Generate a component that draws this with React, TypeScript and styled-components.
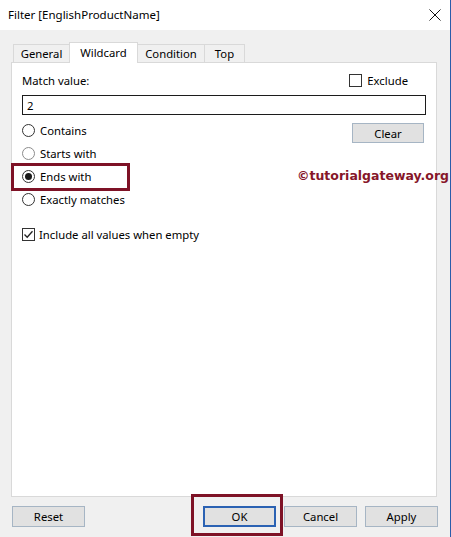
import React from "react";
import styled, { createGlobalStyle } from "styled-components";

const Global = createGlobalStyle`
  html, body { margin: 0; padding: 0; background: #f0f0f0; }
  body {
    font-family: "Noto Sans", "Segoe UI", sans-serif;
    font-size: 11.3px;
    color: #000;
  }
  *, *::before, *::after { box-sizing: border-box; }
`;

const MAROON = "#7e1226";

const Window = styled.div`
  position: relative;
  width: 451px;
  height: 537px;
  display: flex;
  flex-direction: column;
  border-right: 1px solid #2a5caa;
  background: #f0f0f0;
  overflow: hidden;
`;

const TitleBar = styled.div`
  flex: none;
  height: 30px;
  background: #fff;
  display: flex;
  align-items: center;
  justify-content: space-between;
  padding: 0 9px 0 8px;
`;

const Title = styled.span`
  font-size: 11.5px;
  line-height: 14px;
  color: #000;
`;

const Body = styled.div`
  flex: 1;
  display: flex;
  flex-direction: column;
  padding: 12px 13px 0 11px;
`;

const TabRow = styled.div`
  display: flex;
  align-items: flex-end;
  height: 21px;
  margin-bottom: -1px;
  padding-left: 2px;
  position: relative;
  z-index: 1;
`;

const Tab = styled.div<{ $active?: boolean; $w: number }>`
  width: ${(p) => p.$w}px;
  height: ${(p) => (p.$active ? 21 : 19)}px;
  margin-left: -1px;
  display: flex;
  align-items: center;
  justify-content: center;
  background: ${(p) => (p.$active ? "#fff" : "#f0f0f0")};
  border: 1px solid #d9d9d9;
  border-bottom: ${(p) => (p.$active ? "none" : "1px solid #d9d9d9")};
  padding-bottom: ${(p) => (p.$active ? 1 : 0)}px;
  &:first-child { margin-left: 0; }
`;

const Panel = styled.div`
  flex: 1;
  background: #fff;
  border: 1px solid #d9d9d9;
  padding: 11px 10px 0 10px;
  display: flex;
  flex-direction: column;
`;

const HeaderRow = styled.div`
  display: flex;
  align-items: center;
  justify-content: space-between;
  height: 13px;
`;

const Label = styled.span`
  line-height: 14px;
`;

const CheckGroup = styled.label<{ $gap: number }>`
  display: flex;
  align-items: center;
  gap: ${(p) => p.$gap}px;
`;

const ExcludeGroup = styled(CheckGroup)`
  margin-right: 18px;
`;

const Box = styled.span`
  width: 13px;
  height: 13px;
  flex: none;
  border: 1px solid #333;
  background: #fff;
  display: flex;
  align-items: center;
  justify-content: center;
`;

const TextInput = styled.div`
  margin-top: 8px;
  height: 20px;
  border: 1px solid #1c1c1c;
  display: flex;
  align-items: center;
  padding-left: 4px;
`;

const OptionsRow = styled.div`
  margin-top: 4px;
  display: flex;
  justify-content: space-between;
  align-items: flex-start;
`;

const RadioList = styled.div`
  display: flex;
  flex-direction: column;
`;

const RadioRow = styled.div<{ $marked?: boolean }>`
  position: relative;
  height: 23px;
  display: flex;
  align-items: center;
  gap: 5px;
  ${(p) =>
    p.$marked &&
    `
    &::after {
      content: "";
      position: absolute;
      left: -11px;
      top: -2px;
      width: 119px;
      height: 28px;
      border: 3px solid ${MAROON};
    }
  `}
`;

const Circle = styled.span<{ $muted?: boolean }>`
  width: 13px;
  height: 13px;
  flex: none;
  border-radius: 50%;
  border: 1px solid ${(p) => (p.$muted ? "#8c8c8c" : "#333")};
  background: #fff;
  display: flex;
  align-items: center;
  justify-content: center;
`;

const Dot = styled.span`
  width: 7px;
  height: 7px;
  border-radius: 50%;
  background: #1a1a1a;
`;

const Button = styled.div<{ $default?: boolean }>`
  width: 73px;
  height: 21px;
  flex: none;
  display: flex;
  align-items: center;
  justify-content: center;
  background: #e1e1e1;
  border: ${(p) => (p.$default ? "2px solid #2b62b3" : "1px solid #a6b5c4")};
  color: #000;
`;

const ClearButton = styled(Button)`
  margin-top: 4px;
  margin-right: 2px;
  width: 72px;
  height: 20px;
`;

const IncludeRow = styled(CheckGroup)`
  margin-top: 17px;
  height: 13px;
`;

const Footer = styled.div`
  flex: none;
  height: 40px;
  display: flex;
  align-items: flex-start;
  padding: 9px 0 0 1px;
  margin-right: -1px;
`;

const Spacer = styled.div`
  flex: 1;
`;

const ButtonGroup = styled.div`
  display: flex;
  gap: 8px;
`;

const Highlight = styled.div`
  position: relative;
  &::after {
    content: "";
    position: absolute;
    left: -12px;
    top: -12px;
    width: 92px;
    height: 42px;
    border: 3px solid ${MAROON};
  }
`;

const Watermark = styled.div`
  position: absolute;
  left: 297px;
  top: 168px;
  font-family: "DejaVu Sans", Verdana, sans-serif;
  font-weight: bold;
  font-size: 12.5px;
  line-height: 16px;
  color: #861629;
  white-space: nowrap;
`;

const CloseIcon = () => (
  <svg width="12" height="12" viewBox="0 0 12 12">
    <path d="M0.5 0.5 L11.5 11.5 M11.5 0.5 L0.5 11.5" stroke="#111" strokeWidth="1" />
  </svg>
);

const CheckMark = () => (
  <svg width="11" height="11" viewBox="0 0 11 11">
    <path d="M1.5 5.5 L4.2 8.3 L9.5 2.2" fill="none" stroke="#222" strokeWidth="1.3" />
  </svg>
);

const tabs = [
  { label: "General", w: 57 },
  { label: "Wildcard", w: 69, active: true },
  { label: "Condition", w: 68 },
  { label: "Top", w: 41 },
];

const options = [
  { label: "Contains" },
  { label: "Starts with", muted: true },
  { label: "Ends with", checked: true },
  { label: "Exactly matches" },
];

export default function App() {
  return (
    <>
      <Global />
      <Window>
        <TitleBar>
          <Title>Filter [EnglishProductName]</Title>
          <CloseIcon />
        </TitleBar>
        <Body>
          <TabRow>
            {tabs.map((t) => (
              <Tab key={t.label} $active={t.active} $w={t.w}>
                {t.label}
              </Tab>
            ))}
          </TabRow>
          <Panel>
            <HeaderRow>
              <Label>Match value:</Label>
              <ExcludeGroup $gap={5}>
                <Box />
                <Label>Exclude</Label>
              </ExcludeGroup>
            </HeaderRow>
            <TextInput>2</TextInput>
            <OptionsRow>
              <RadioList>
                {options.map((o) => (
                  <RadioRow key={o.label} $marked={o.checked}>
                    <Circle $muted={o.muted}>{o.checked && <Dot />}</Circle>
                    <Label>{o.label}</Label>
                  </RadioRow>
                ))}
              </RadioList>
              <ClearButton>Clear</ClearButton>
            </OptionsRow>
            <IncludeRow $gap={4}>
              <Box>
                <CheckMark />
              </Box>
              <Label>Include all values when empty</Label>
            </IncludeRow>
          </Panel>
          <Footer>
            <Button>Reset</Button>
            <Spacer />
            <ButtonGroup>
              <Highlight>
                <Button $default>OK</Button>
              </Highlight>
              <Button>Cancel</Button>
              <Button>Apply</Button>
            </ButtonGroup>
          </Footer>
        </Body>
        <Watermark>©tutorialgateway.org</Watermark>
      </Window>
    </>
  );
}
